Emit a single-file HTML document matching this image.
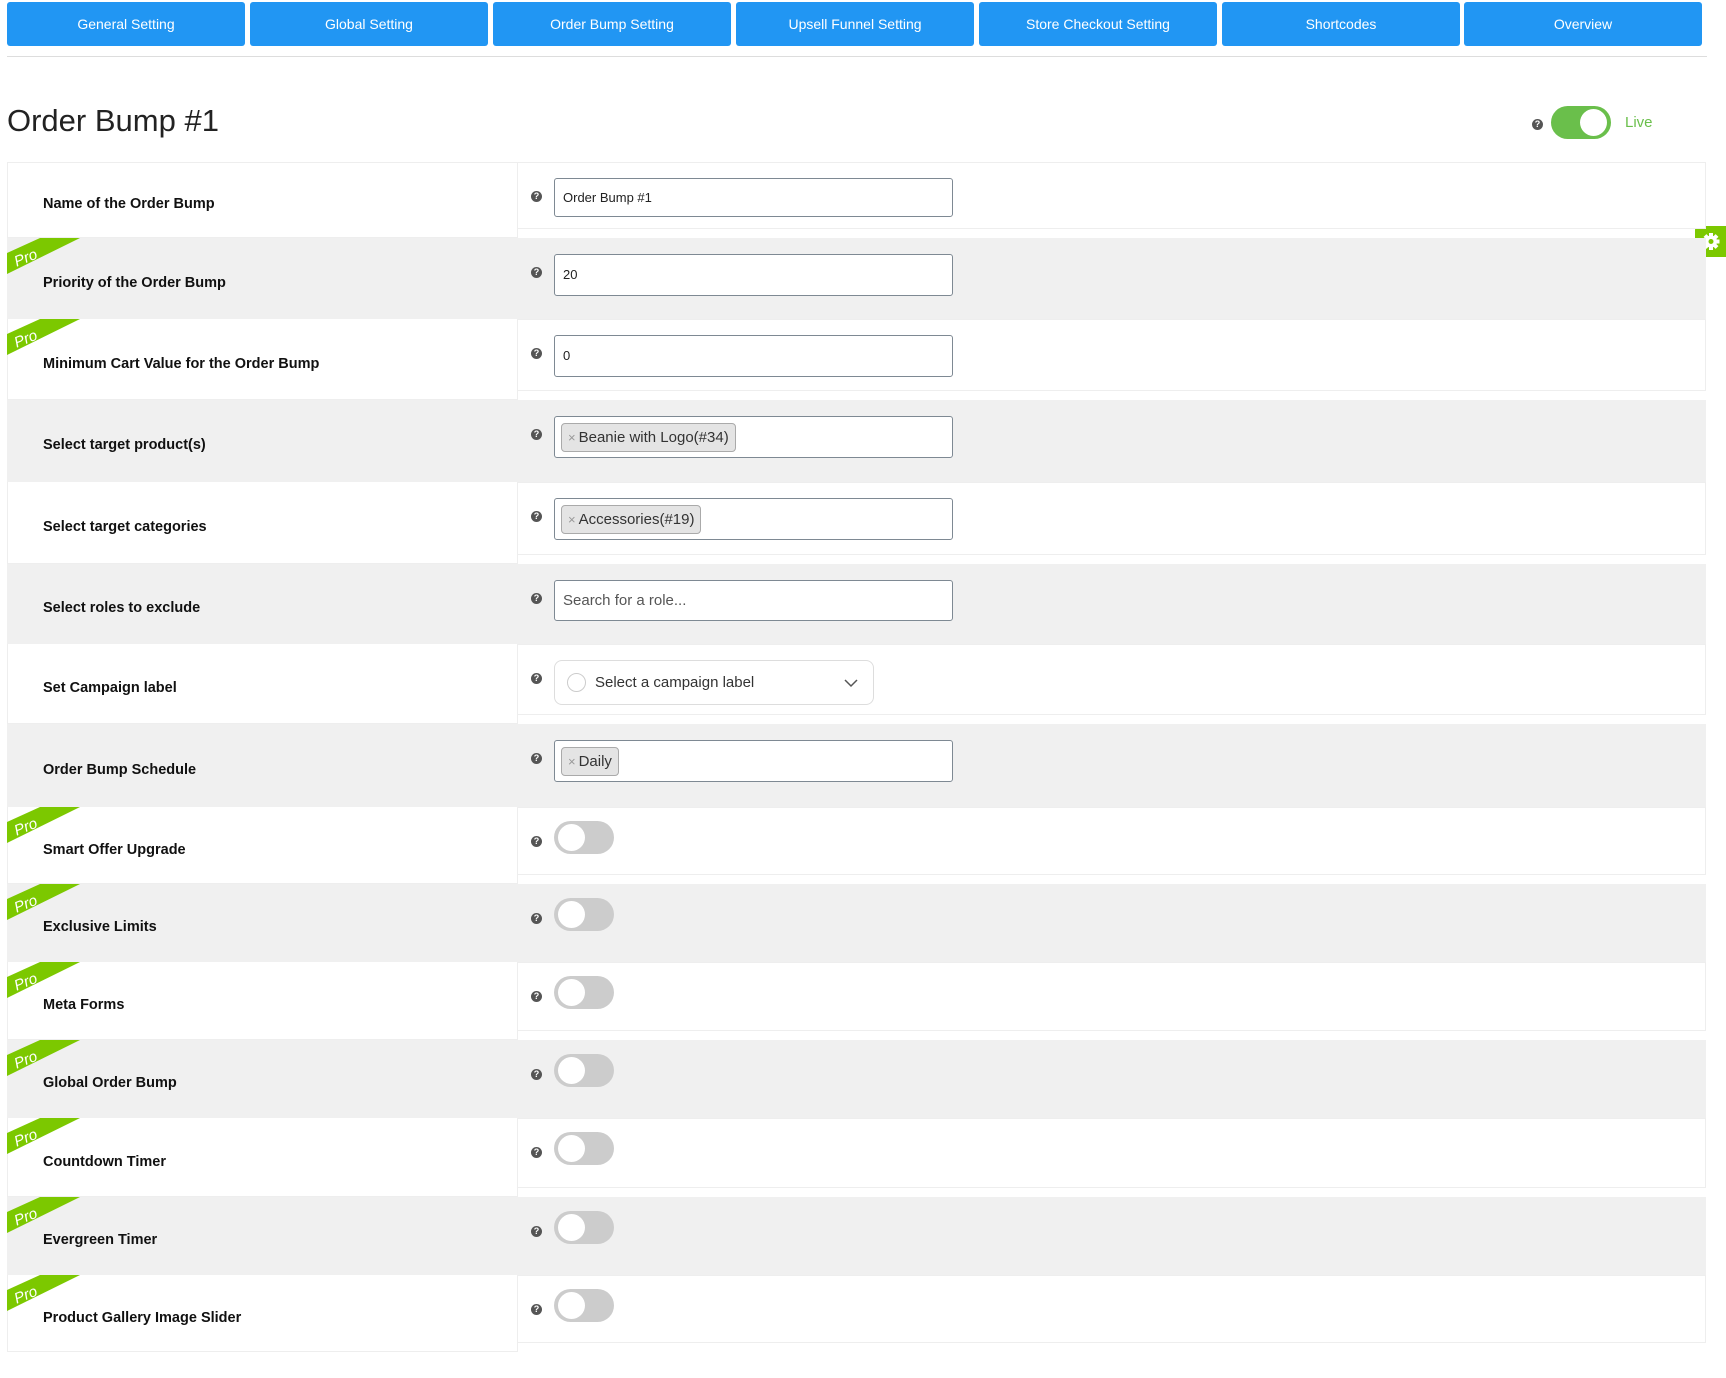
<!DOCTYPE html>
<html><head><meta charset="utf-8"><style>
*{box-sizing:border-box;margin:0;padding:0}
body{width:1726px;height:1378px;background:#fff;font-family:"Liberation Sans",sans-serif;position:relative;overflow:hidden;color:#111}
.tab{position:absolute;top:2px;height:44px;width:238px;background:#2196f3;color:#fff;font-size:14px;text-align:center;line-height:44px;border-radius:3px}
.abs{position:absolute}
.row{position:absolute;left:7px;width:1699px}
.gray{background:#f0f0f0}
.lcell{position:absolute;left:7px;width:511px;border:1px solid #eee;border-top:none;background:#fff}
.rcell{position:absolute;left:517px;width:1189px;border:1px solid #eee;background:#fff}
.lab{position:absolute;left:43px;font-size:14.5px;font-weight:bold;color:#111}
.help{position:absolute;left:531px;width:11px;height:11px;border-radius:50%;background:#555;color:#fff;font-size:9px;font-weight:bold;text-align:center;line-height:11px}
.inp{position:absolute;left:554px;width:399px;border:1px solid #7e8993;border-radius:3px;background:#fff;font-size:13px;padding-left:8px;color:#222}
.tag{position:absolute;left:6px;top:5px;height:29px;background:#e4e4e4;border:1px solid #aaa;border-radius:4px;font-size:15px;line-height:27px;padding:0 6px 0 6px;color:#333}
.tag b{font-weight:normal;color:#999;font-size:13px;margin-right:3px}
.tog{position:absolute;left:554px;width:60px;height:33px;border-radius:17px;background:#ccc}
.tog i{position:absolute;left:4px;top:3px;width:27px;height:27px;border-radius:50%;background:#fff}
.pro{position:absolute;left:7px;width:80px;height:40px}
</style></head><body>
<div class="tab" style="left:7px">General Setting</div>
<div class="tab" style="left:250px">Global Setting</div>
<div class="tab" style="left:493px">Order Bump Setting</div>
<div class="tab" style="left:736px">Upsell Funnel Setting</div>
<div class="tab" style="left:979px">Store Checkout Setting</div>
<div class="tab" style="left:1222px">Shortcodes</div>
<div class="tab" style="left:1464px">Overview</div>
<div class="abs" style="left:7px;top:56px;width:1700px;height:1px;background:#ddd"></div>
<div class="abs" style="left:7px;top:103px;font-size:31px;color:#222">Order Bump #1</div>
<div class="help" style="left:1532px;top:119px">?</div>
<div class="abs" style="left:1551px;top:106px;width:60px;height:33px;border-radius:17px;background:#6abf4b"><i style="position:absolute;right:4px;top:3px;width:27px;height:27px;border-radius:50%;background:#fff"></i></div>
<div class="abs" style="left:1625px;top:114px;font-size:15px;color:#6abf4b">Live</div>
<svg class="abs" style="left:1695px;top:226px" width="31" height="31" viewBox="0 0 31 31"><rect width="31" height="31" rx="4" fill="#7cc800"/><rect x="20" width="11" height="31" fill="#7cc800"/><g fill="#fff" transform="translate(16 15.5)"><circle r="6"/><rect x="-2" y="-8.5" width="4" height="17"/><rect x="-2" y="-8.5" width="4" height="17" transform="rotate(45)"/><rect x="-2" y="-8.5" width="4" height="17" transform="rotate(90)"/><rect x="-2" y="-8.5" width="4" height="17" transform="rotate(135)"/></g><circle cx="16" cy="15.5" r="2.5" fill="#7cc800"/></svg>
<div id="t"></div>
<script>
var rows=[
["Name of the Order Bump",0,"inp","Order Bump #1"],
["Priority of the Order Bump",1,"inp","20"],
["Minimum Cart Value for the Order Bump",1,"inp","0"],
["Select target product(s)",0,"tag","Beanie with Logo(#34)"],
["Select target categories",0,"tag","Accessories(#19)"],
["Select roles to exclude",0,"ph","Search for a role..."],
["Set Campaign label",0,"sel",""],
["Order Bump Schedule",0,"tag","Daily"],
["Smart Offer Upgrade",1,"tog"],
["Exclusive Limits",1,"tog"],
["Meta Forms",1,"tog"],
["Global Order Bump",1,"tog"],
["Countdown Timer",1,"tog"],
["Evergreen Timer",1,"tog"],
["Product Gallery Image Slider",1,"tog"]];
var b=[162,238,319,400,482,564,644,724,807,884,962,1040,1118,1197,1275,1352];
var h="";
rows.forEach(function(r,i){var T=b[i],H=b[i+1]-T,g=i%2==1;
if(g)h+='<div class="row gray" style="top:'+T+'px;height:'+H+'px"></div>';
else{h+='<div class="lcell" style="top:'+T+'px;height:'+H+'px;'+(i==0?'border-top:1px solid #eee':'')+'"></div><div class="rcell" style="top:'+T+'px;height:'+(H-9)+'px"></div>';}
if(r[1])h+='<svg class="pro" style="top:'+T+'px" viewBox="0 0 80 40"><polygon points="0,15 33,0 73,0 0,36" fill="#7cc800"/><text x="7" y="25" fill="#fff" font-size="15" font-style="italic" font-family="Liberation Sans" transform="rotate(-22 18 20)">Pro</text></svg>';
h+='<div class="lab" style="top:'+(T+H/2-4)+'px">'+r[0]+'</div>';
h+='<div class="help" style="top:'+(T+29)+'px">?</div>';
var it=T+16,ih=(i==0?39:42);
if(r[2]=="inp")h+='<div class="inp" style="top:'+it+'px;height:'+ih+'px;line-height:'+(ih-2)+'px">'+r[3]+'</div>';
if(r[2]=="ph")h+='<div class="inp" style="top:'+it+'px;height:41px;line-height:39px;font-size:15px;color:#555">'+r[3]+'</div>';
if(r[2]=="tag")h+='<div class="inp" style="top:'+it+'px;height:42px"><div class="tag" style="top:6px"><b>×</b>'+r[3]+'</div></div>';
if(r[2]=="sel")h+='<div class="abs" style="left:554px;top:'+it+'px;width:320px;height:45px;border:1px solid #ddd;border-radius:8px;background:#fff"><div class="abs" style="left:12px;top:12px;width:19px;height:19px;border:1px solid #ccc;border-radius:50%"></div><div class="abs" style="left:40px;top:13px;font-size:15px;color:#333">Select a campaign label</div><svg class="abs" style="left:289px;top:17px" width="14" height="10"><path d="M1 2l6 6 6-6" stroke="#555" stroke-width="1.5" fill="none"/></svg></div>';
if(r[2]=="tog")h+='<div class="tog" style="top:'+(T+14)+'px"><i></i></div>';
});
document.getElementById("t").innerHTML=h;
</script>
</body></html>
